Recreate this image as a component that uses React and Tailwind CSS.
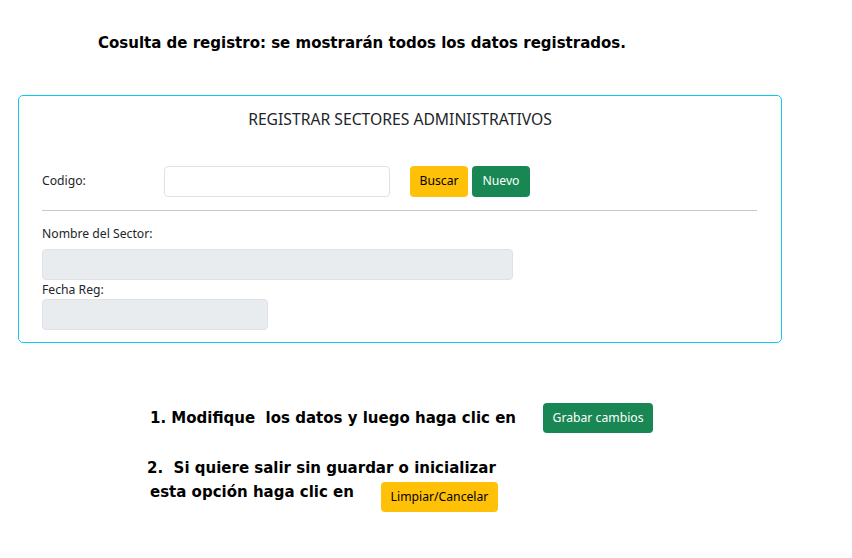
export default function App() {
  const heading = { fontFamily: "'DejaVu Sans', Lato, sans-serif" };
  const body = { fontFamily: "'Noto Sans', 'Open Sans', sans-serif" };

  return (
    <div className="w-[852px] h-[558px] bg-white text-[#212529]" style={body}>
      {/* page intro */}
      <div className="pt-[31px] pl-[98px] h-[95px]">
        <h2 className="text-[15px] font-bold text-black leading-[24px]" style={heading}>
          Cosulta de registro: se mostrarán todos los datos registrados.
        </h2>
      </div>

      {/* form card */}
      <div className="ml-[18px] w-[764px] h-[248px] border border-[#0dcaf0] rounded-[5px] px-[23px]">
        <div className="text-center text-[15.7px] text-[#212529] pt-[12px] leading-[22px]">
          REGISTRAR SECTORES ADMINISTRATIVOS
        </div>

        <div className="flex items-center mt-[36px] h-[31px] text-[12.2px]">
          <label className="w-[122px]">Codigo:</label>
          <input className="w-[226px] h-[31px] border border-[#dee2e6] rounded-[4px] px-2 outline-none" />
          <button className="ml-[20px] w-[58px] h-[31px] rounded-[4px] bg-[#ffc107] text-black">Buscar</button>
          <button className="ml-[4px] w-[58px] h-[31px] rounded-[4px] bg-[#198754] text-white">Nuevo</button>
        </div>

        <hr className="mt-[13px] border-t border-[#c8c8c8] w-[715px]" />

        <div className="text-[12.2px] mt-[14px] leading-[18px]">Nombre del Sector:</div>
        <input disabled className="mt-[6px] block w-[471px] h-[31px] bg-[#e9ecef] border border-[#dee2e6] rounded-[4px]" />
        <div className="text-[12.2px] mt-[1px] leading-[18px]">Fecha Reg:</div>
        <input disabled className="block w-[226px] h-[31px] bg-[#e9ecef] border border-[#dee2e6] rounded-[4px]" />
      </div>

      {/* instructions */}
      <div className="mt-[60px] flex items-center pl-[150px] h-[30px]">
        <span className="text-[15px] font-bold text-black w-[393px] leading-[24px]" style={heading}>
          1. Modifique&nbsp; los datos y luego haga clic en
        </span>
        <button className="h-[30px] w-[110px] rounded-[4px] bg-[#198754] text-white text-[12.2px]">Grabar cambios</button>
      </div>

      <div className="mt-[23px] pl-[147px] text-[15px] font-bold text-black leading-[24px]" style={heading}>
        2.&nbsp; Si quiere salir sin guardar o inicializar
      </div>
      <div className="flex items-start pl-[150px]">
        <span className="text-[15px] font-bold text-black leading-[24px] w-[231px]" style={heading}>
          esta opción haga clic en
        </span>
        <button className="mt-[2px] h-[30px] w-[117px] rounded-[4px] bg-[#ffc107] text-black text-[12.2px]">Limpiar/Cancelar</button>
      </div>
    </div>
  );
}
